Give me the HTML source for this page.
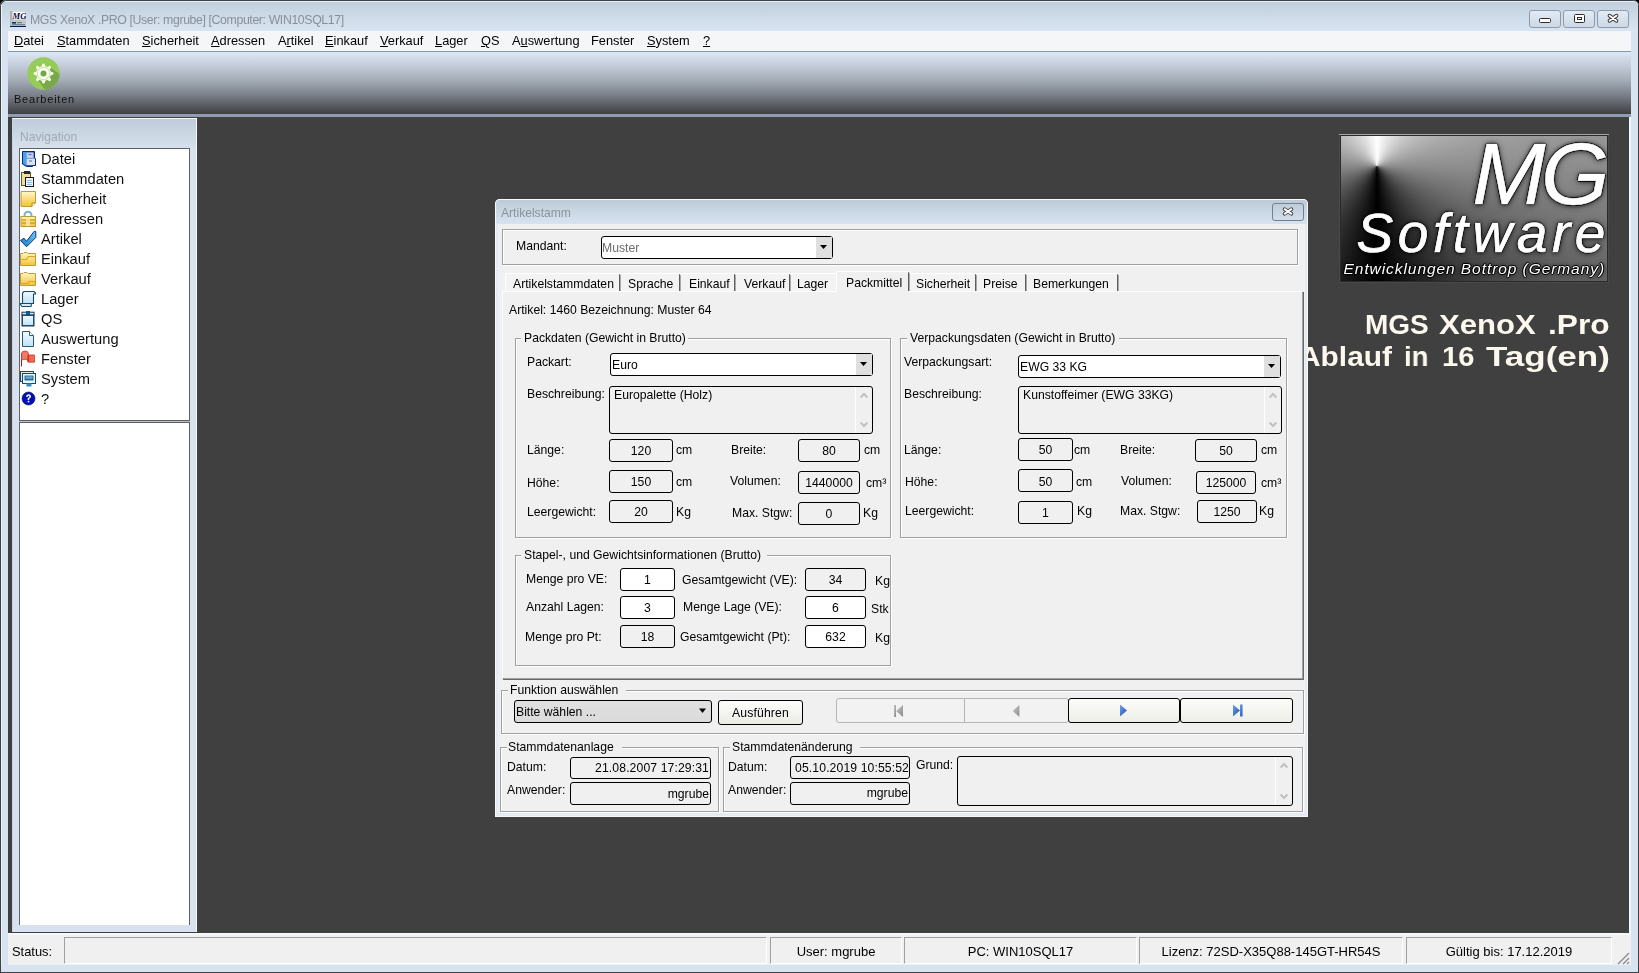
<!DOCTYPE html>
<html><head><meta charset="utf-8"><title>MGS XenoX .PRO</title>
<style>
html,body{margin:0;padding:0;width:1639px;height:973px;overflow:hidden;background:#2e2e2e;}
body{position:relative;font-family:"Liberation Sans", sans-serif;color:#000;}
.b{position:absolute;}
.t{position:absolute;white-space:nowrap;will-change:transform;}
u{text-decoration:underline;text-underline-offset:1px;}
</style></head><body>
<div class="b" style="left:0px;top:0px;width:1639px;height:973px;background:#000;"></div>
<div class="b" style="left:0px;top:0px;width:1639px;height:973px;background:#d7e3f0;border-radius:6px 6px 0 0;box-shadow:inset 1px 1px 0 #3e4146, inset -1px -1px 0 #3e4146;"></div>
<div class="b" style="left:1px;top:1px;width:1637px;height:31px;background:linear-gradient(#c1cfdd,#d9e5f2);border-radius:6px 6px 0 0;"></div>
<div class="b" style="left:5px;top:1px;width:1629px;height:1px;background:#e6edf5;"></div>
<div class="b" style="left:1px;top:5px;width:1px;height:960px;background:#eef3fa;"></div>
<svg class="b" style="left:10px;top:11px" width="16" height="16" viewBox="0 0 16 16"><rect x="0" y="0" width="16" height="16" fill="#aeb2b8"/><rect x="2.5" y="0.5" width="13" height="8" fill="#fff"/><text x="2.6" y="7.8" font-family="Liberation Serif" font-style="italic" font-weight="bold" font-size="8.6" fill="#06063a">MG</text><rect x="1" y="9" width="15" height="6" fill="#c3c6ca"/><rect x="2" y="11" width="4" height="1.6" fill="#14306a"/><rect x="7" y="11.2" width="5" height="1" fill="#5a7070"/><rect x="2" y="13" width="13" height="1.3" fill="#6a8a92"/><rect x="0" y="15" width="16" height="1.5" fill="#08185a"/></svg>
<div class="t" style="left:29.6px;top:12px;font-size:12.3px;line-height:16px;color:#8a9099;letter-spacing:-0.38px;">MGS XenoX .PRO [User: mgrube] [Computer: WIN10SQL17]</div>
<div class="b" style="left:1529px;top:10px;width:32px;height:18px;box-sizing:border-box;border:1px solid #8d9bad;border-radius:3px;background:linear-gradient(#e3ebf4,#ccd8e5);"></div>
<div class="b" style="left:1563px;top:10px;width:32px;height:18px;box-sizing:border-box;border:1px solid #8d9bad;border-radius:3px;background:linear-gradient(#e3ebf4,#ccd8e5);"></div>
<div class="b" style="left:1597px;top:10px;width:32px;height:18px;box-sizing:border-box;border:1px solid #8d9bad;border-radius:3px;background:linear-gradient(#e3ebf4,#ccd8e5);"></div>
<svg class="b" style="left:1529px;top:10px" width="100" height="18" viewBox="0 0 100 18"><rect x="10.5" y="8.5" width="11" height="4" rx="1" fill="#fff" stroke="#2a2a2a" stroke-width="1"/><rect x="45.5" y="4.5" width="10" height="8" rx="1" fill="#fff" stroke="#2a2a2a" stroke-width="1"/><rect x="48.5" y="7.5" width="4" height="2" fill="none" stroke="#2a2a2a" stroke-width="1"/><path d="M80.6 5.7 L87.4 10.8 M87.4 5.7 L80.6 10.8" stroke="#2a2a2a" stroke-width="3.8" stroke-linecap="round"/><path d="M80.6 5.7 L87.4 10.8 M87.4 5.7 L80.6 10.8" stroke="#fff" stroke-width="2" stroke-linecap="round"/></svg>
<div class="b" style="left:8px;top:31px;width:1623px;height:20px;background:#f5f6f7;"></div>
<div class="b" style="left:8px;top:51px;width:1623px;height:1px;background:#8797ab;"></div>
<div class="t" style="left:14px;top:33px;font-size:12.8px;line-height:16px;"><u>D</u>atei</div>
<div class="t" style="left:57px;top:33px;font-size:12.8px;line-height:16px;"><u>S</u>tammdaten</div>
<div class="t" style="left:142px;top:33px;font-size:12.8px;line-height:16px;"><u>S</u>icherheit</div>
<div class="t" style="left:211px;top:33px;font-size:12.8px;line-height:16px;"><u>A</u>dressen</div>
<div class="t" style="left:278px;top:33px;font-size:12.8px;line-height:16px;">A<u>r</u>tikel</div>
<div class="t" style="left:325px;top:33px;font-size:12.8px;line-height:16px;"><u>E</u>inkauf</div>
<div class="t" style="left:380px;top:33px;font-size:12.8px;line-height:16px;"><u>V</u>erkauf</div>
<div class="t" style="left:435px;top:33px;font-size:12.8px;line-height:16px;"><u>L</u>ager</div>
<div class="t" style="left:481px;top:33px;font-size:12.8px;line-height:16px;"><u>Q</u>S</div>
<div class="t" style="left:512px;top:33px;font-size:12.8px;line-height:16px;">A<u>u</u>swertung</div>
<div class="t" style="left:591px;top:33px;font-size:12.8px;line-height:16px;">Fenster</div>
<div class="t" style="left:647px;top:33px;font-size:12.8px;line-height:16px;"><u>S</u>ystem</div>
<div class="t" style="left:703px;top:33px;font-size:12.8px;line-height:16px;"><u>?</u></div>
<div class="b" style="left:8px;top:52px;width:1623px;height:62px;background:linear-gradient(#dce8f6 0%,#c3ccd8 22%,#a5adb8 45%,#7d838c 68%,#55585e 88%,#3e3f43 100%);"></div>
<div class="b" style="left:8px;top:114px;width:1623px;height:3px;background:#8f9cb2;"></div>
<svg class="b" style="left:27.2px;top:57.2px" width="33" height="33" viewBox="0 0 33 33"><defs><clipPath id="gc"><circle cx="16.5" cy="16.5" r="16.2"/></clipPath></defs><circle cx="16.5" cy="16.5" r="16.2" fill="#96cb5a"/><path d="M22.5 10 L34 18 L34 34 L19 34 L10.5 22.5 Z" fill="#78a84a" clip-path="url(#gc)"/><g fill="#f5fde2"><circle cx="16.5" cy="16.5" r="7.4"/><path d="M14.6 10 L15.3 6.9 Q16.5 5.9 17.7 6.9 L18.4 10 Z" transform="rotate(0 16.5 16.5)"/><path d="M14.6 10 L15.3 6.9 Q16.5 5.9 17.7 6.9 L18.4 10 Z" transform="rotate(45 16.5 16.5)"/><path d="M14.6 10 L15.3 6.9 Q16.5 5.9 17.7 6.9 L18.4 10 Z" transform="rotate(90 16.5 16.5)"/><path d="M14.6 10 L15.3 6.9 Q16.5 5.9 17.7 6.9 L18.4 10 Z" transform="rotate(135 16.5 16.5)"/><path d="M14.6 10 L15.3 6.9 Q16.5 5.9 17.7 6.9 L18.4 10 Z" transform="rotate(180 16.5 16.5)"/><path d="M14.6 10 L15.3 6.9 Q16.5 5.9 17.7 6.9 L18.4 10 Z" transform="rotate(225 16.5 16.5)"/><path d="M14.6 10 L15.3 6.9 Q16.5 5.9 17.7 6.9 L18.4 10 Z" transform="rotate(270 16.5 16.5)"/><path d="M14.6 10 L15.3 6.9 Q16.5 5.9 17.7 6.9 L18.4 10 Z" transform="rotate(315 16.5 16.5)"/></g><circle cx="16.5" cy="16.5" r="6.3" fill="none" stroke="#c9d6b4" stroke-width="0.9"/><circle cx="16.5" cy="16.5" r="4.2" fill="none" stroke="#fbfff0" stroke-width="2.3"/><circle cx="16.5" cy="16.5" r="3" fill="#76a64a"/></svg>
<div class="t" style="left:13.5px;top:92px;font-size:11px;line-height:14px;color:#111;letter-spacing:0.78px;">Bearbeiten</div>
<div class="b" style="left:8px;top:117px;width:1622px;height:816px;background:#404040;"></div>
<div class="b" style="left:1629px;top:117px;width:2px;height:818px;background:#f4f7fb;"></div>
<div class="b" style="left:8px;top:933px;width:1623px;height:2px;background:#f4f7fb;"></div>
<div class="b" style="left:12px;top:118px;width:185px;height:814px;background:linear-gradient(#bfcbd8 0px,#d7e2ee 32px,#d7e2ee 100%);"></div>
<div class="b" style="left:12px;top:118px;width:185px;height:1px;background:#f6f9fc;"></div>
<div class="b" style="left:196px;top:118px;width:1px;height:814px;background:#f6f9fc;"></div>
<div class="b" style="left:12px;top:118px;width:1px;height:814px;background:#c9d4e0;"></div>
<div class="t" style="left:19.6px;top:129px;font-size:12.1px;line-height:16px;color:#a1a9b3;">Navigation</div>
<div class="b" style="left:19px;top:148px;width:171px;height:273px;box-sizing:border-box;background:#fff;border:1px solid #5f6165;"></div>
<div class="b" style="left:19px;top:421px;width:171px;height:1px;background:#b9bfc6;"></div>
<div class="b" style="left:19px;top:422px;width:171px;height:503px;box-sizing:border-box;background:#fff;border:1px solid #5f6165;border-bottom:none;"></div>
<svg class="b" style="left:0;top:0" width="1" height="1"><defs><linearGradient id="gy" x1="0" y1="0" x2="0" y2="1"><stop offset="0" stop-color="#fff8c8"/><stop offset="1" stop-color="#f4c232"/></linearGradient><linearGradient id="gb" x1="1" y1="0" x2="0" y2="1"><stop offset="0" stop-color="#6ccaff"/><stop offset="1" stop-color="#1a78c8"/></linearGradient><linearGradient id="gl" x1="0" y1="0" x2="0" y2="1"><stop offset="0" stop-color="#f0faff"/><stop offset="1" stop-color="#bfe2f6"/></linearGradient><linearGradient id="gs" x1="0" y1="0" x2="0" y2="1"><stop offset="0" stop-color="#8acff4"/><stop offset="1" stop-color="#2a78b8"/></linearGradient></defs></svg>
<svg class="b" style="left:19px;top:149px" width="20" height="20" viewBox="0 0 20 20"><path d="M3.5 2.5 H15.5 V9.5 H16.5 V16.5 H13.5 V17.5 H7.5 L3.5 15 Z" fill="#1f5fb8" stroke="#0c2a66"/><path d="M4 3 H7.5 V16.5 L4 14.5Z" fill="#44a0f0"/><rect x="7.5" y="3.5" width="7" height="5.5" fill="#c3cff0"/><rect x="7.5" y="9.5" width="8.5" height="6.5" fill="#d8e0f6"/><path d="M9.5 5.5 h3 M10 12 h3" stroke="#5a6a90" stroke-width="1"/></svg>
<div class="t" style="left:40.6px;top:150px;font-size:14.7px;line-height:19px;color:#111;">Datei</div>
<svg class="b" style="left:19px;top:169px" width="20" height="20" viewBox="0 0 20 20"><rect x="2.5" y="3.5" width="9" height="13" fill="#f2dc98" stroke="#6b5b2a"/><rect x="5" y="2" width="6" height="3" fill="#2a2a2a"/><rect x="6.5" y="8.5" width="8" height="9" fill="#eaf4fc" stroke="#1a1a1a"/><path d="M8 11.5h5M8 13.5h5M8 15.5h5" stroke="#8cc0e8" stroke-width="1.2"/></svg>
<div class="t" style="left:40.6px;top:170px;font-size:14.7px;line-height:19px;color:#111;">Stammdaten</div>
<svg class="b" style="left:19px;top:189px" width="20" height="20" viewBox="0 0 20 20"><path d="M2 2.5 H16.5 V14 L13 17.5 H2 Z" fill="url(#gy)" stroke="#c09a3a"/><path d="M13 17.5 V14 H16.5" fill="#fff6c0" stroke="#b08a2a"/></svg>
<div class="t" style="left:40.6px;top:190px;font-size:14.7px;line-height:19px;color:#111;">Sicherheit</div>
<svg class="b" style="left:19px;top:209px" width="20" height="20" viewBox="0 0 20 20"><path d="M5.5 7.5 V6 A3.5 3.3 0 0 1 12.5 6 V7.5" fill="none" stroke="#7ab0d8" stroke-width="2"/><rect x="2" y="7.5" width="14.5" height="10" fill="url(#gy)" stroke="#c09a3a"/><path d="M2.5 11 H16 M2.5 14 H16" stroke="#d4a010" stroke-width="1.6"/><rect x="7" y="8" width="4" height="9" fill="#fbe9a0" opacity=".85"/></svg>
<div class="t" style="left:40.6px;top:210px;font-size:14.7px;line-height:19px;color:#111;">Adressen</div>
<svg class="b" style="left:19px;top:229px" width="20" height="20" viewBox="0 0 20 20"><path d="M1.5 11.5 L5 9.2 L7.5 12.3 L15.2 2.3 L16.8 2.6 L16.8 8.4 L7.5 17.8 Z" fill="url(#gb)" stroke="#0a3a70" stroke-width="1"/></svg>
<div class="t" style="left:40.6px;top:230px;font-size:14.7px;line-height:19px;color:#111;">Artikel</div>
<svg class="b" style="left:19px;top:249px" width="20" height="20" viewBox="0 0 20 20"><path d="M1.5 4.5 H4 L5 3.5 H8 L9 4.5 H16.5 V16.5 H1.5 Z" fill="url(#gy)" stroke="#c09a3a"/><path d="M1.5 10.5 H7.5 L9.5 7.5 H16.5" fill="none" stroke="#d8a820" stroke-width="1.2"/></svg>
<div class="t" style="left:40.6px;top:250px;font-size:14.7px;line-height:19px;color:#111;">Einkauf</div>
<svg class="b" style="left:19px;top:269px" width="20" height="20" viewBox="0 0 20 20"><path d="M1.5 4.5 H4 L5 3.5 H8 L9 4.5 H16.5 V16.5 H1.5 Z" fill="url(#gy)" stroke="#c09a3a"/><path d="M1.5 14.5 H9 L10 12.5 H16.5" fill="none" stroke="#d8a820" stroke-width="1.2"/></svg>
<div class="t" style="left:40.6px;top:270px;font-size:14.7px;line-height:19px;color:#111;">Verkauf</div>
<svg class="b" style="left:19px;top:289px" width="20" height="20" viewBox="0 0 20 20"><path d="M5 2.5 H15 L16.5 4 V5 H14.5 V14.5 H3.5 V4 Z" fill="url(#gl)" stroke="#1a4a6a" stroke-width="1.1"/><path d="M1.5 14.5 H12 Q12.8 16 12 17.5 H3 L1.5 15.5Z" fill="#d4ecfa" stroke="#1a4a6a" stroke-width="1.1"/></svg>
<div class="t" style="left:40.6px;top:290px;font-size:14.7px;line-height:19px;color:#111;">Lager</div>
<svg class="b" style="left:19px;top:309px" width="20" height="20" viewBox="0 0 20 20"><rect x="3" y="3.2" width="12" height="3" fill="#c8ecfc" stroke="#1a3a5a"/><rect x="7" y="2" width="4" height="4.5" fill="#0f5a96"/><rect x="3.2" y="6.2" width="11.6" height="10.6" fill="url(#gl)" stroke="#1a3a5a" stroke-width="1.4"/></svg>
<div class="t" style="left:40.6px;top:310px;font-size:14.7px;line-height:19px;color:#111;">QS</div>
<svg class="b" style="left:19px;top:329px" width="20" height="20" viewBox="0 0 20 20"><path d="M3.5 2.5 H10.5 L14.5 6.5 V17.5 H3.5 Z" fill="url(#gl)" stroke="#2a5a7a"/><path d="M10.5 2.5 V6.5 H14.5" fill="#fff" stroke="#2a5a7a"/></svg>
<div class="t" style="left:40.6px;top:330px;font-size:14.7px;line-height:19px;color:#111;">Auswertung</div>
<svg class="b" style="left:19px;top:349px" width="20" height="20" viewBox="0 0 20 20"><path d="M2.5 4 V17.5" stroke="#902818" stroke-width="1"/><path d="M2.5 5 Q2.5 2 6 2 Q9.5 2 9.5 5 V11 Q6 9.5 2.5 11Z" fill="#f07a68" stroke="#c83a28" stroke-width=".8"/><path d="M9 6 H15.5 V13.2 H9.5 Q8.5 13.2 8.5 12 Z" fill="#f06850" stroke="#c83a28" stroke-width=".8"/><path d="M9.5 6.5 V12.5" stroke="#d03020" stroke-width="1.2"/></svg>
<div class="t" style="left:40.6px;top:350px;font-size:14.7px;line-height:19px;color:#111;">Fenster</div>
<svg class="b" style="left:19px;top:369px" width="20" height="20" viewBox="0 0 20 20"><rect x="1.5" y="2.5" width="13" height="10" fill="#d8f0fc" stroke="#1a4a6a"/><rect x="3.5" y="4.5" width="13" height="10" fill="#e4f6fd" stroke="#1a4a6a"/><rect x="6" y="7" width="8" height="4" fill="url(#gs)" stroke="#1a4a6a" stroke-width=".8"/><rect x="7.5" y="14.5" width="5" height="3" fill="#3a8ac8"/></svg>
<div class="t" style="left:40.6px;top:370px;font-size:14.7px;line-height:19px;color:#111;">System</div>
<svg class="b" style="left:19px;top:389px" width="20" height="20" viewBox="0 0 20 20"><circle cx="9.5" cy="9.5" r="6.5" fill="#0010b4" stroke="#000a70" stroke-width=".6"/><path d="M7.2 7.9 Q7.2 5.3 9.6 5.3 Q12 5.3 12 7.5 Q12 8.9 10.2 9.7 V10.9 H8.7 V9.1 Q10.4 8.5 10.4 7.5 Q10.4 6.7 9.5 6.7 Q8.7 6.7 8.7 7.9Z" fill="#fff"/><rect x="8.7" y="11.8" width="1.6" height="1.6" fill="#fff"/></svg>
<div class="t" style="left:40.6px;top:390px;font-size:14.7px;line-height:19px;color:#111;">?</div>
<div class="b" style="left:8px;top:935px;width:1623px;height:30px;background:#f0f0f0;"></div>
<div class="t" style="left:12.4px;top:943px;font-size:12.9px;line-height:17px;">Status:</div>
<div class="b" style="left:64px;top:937px;width:703px;height:27px;box-sizing:border-box;border-top:1px solid #a0a0a0;border-left:1px solid #a0a0a0;border-right:1px solid #fff;border-bottom:1px solid #fff;"></div>
<div class="b" style="left:770px;top:937px;width:132px;height:27px;box-sizing:border-box;border-top:1px solid #a0a0a0;border-left:1px solid #a0a0a0;border-right:1px solid #fff;border-bottom:1px solid #fff;"></div>
<div class="t" style="left:770px;width:132px;text-align:center;top:943px;font-size:13px;line-height:17px;">User: mgrube</div>
<div class="b" style="left:904px;top:937px;width:233px;height:27px;box-sizing:border-box;border-top:1px solid #a0a0a0;border-left:1px solid #a0a0a0;border-right:1px solid #fff;border-bottom:1px solid #fff;"></div>
<div class="t" style="left:904px;width:233px;text-align:center;top:943px;font-size:13px;line-height:17px;">PC: WIN10SQL17</div>
<div class="b" style="left:1139px;top:937px;width:264px;height:27px;box-sizing:border-box;border-top:1px solid #a0a0a0;border-left:1px solid #a0a0a0;border-right:1px solid #fff;border-bottom:1px solid #fff;"></div>
<div class="t" style="left:1139px;width:264px;text-align:center;top:943px;font-size:13px;line-height:17px;">Lizenz: 72SD-X35Q88-145GT-HR54S</div>
<div class="b" style="left:1406px;top:937px;width:206px;height:27px;box-sizing:border-box;border-top:1px solid #a0a0a0;border-left:1px solid #a0a0a0;border-right:1px solid #fff;border-bottom:1px solid #fff;"></div>
<div class="t" style="left:1406px;width:206px;text-align:center;top:943px;font-size:13px;line-height:17px;">Gültig bis: 17.12.2019</div>
<svg class="b" style="left:1616px;top:950.5px" width="14" height="14" viewBox="0 0 14 14"><path d="M13 2 L2 13 M13 7 L7 13 M13 11 L11 13" stroke="#8a8a8a" stroke-width="1.3"/></svg>
<div class="b" style="left:1339px;top:134px;width:270px;height:149px;background:#4a4a4a;"></div>
<div class="b" style="left:1339px;top:134px;width:270px;height:1px;background:#a4a4a4;"></div>
<div class="b" style="left:1340px;top:135px;width:268px;height:147px;background:#2a2a2a;"></div>
<div class="b" style="left:1341px;top:136px;width:266px;height:145px;background:conic-gradient(from 0deg at 36px 30px,#ffffff 0deg,#8e8e8e 90deg,#000 180deg,#8a8a8a 270deg,#ffffff 360deg);overflow:hidden;"></div>
<div class="t" style="left:1385px;width:220px;text-align:right;top:119px;font-size:88px;line-height:110px;color:#fff;font-style:italic;text-shadow:1px 0 0 #000,-1px 0 0 #000,0 1px 0 #000,0 -1px 0 #000,0 0 2px #000,0 0 4px rgba(0,0,0,.8),0 1px 7px rgba(0,0,0,.6);letter-spacing:-4.5px;-webkit-text-stroke:0.5px #fff;">MG</div>
<div class="t" style="left:1289.5px;width:320px;text-align:right;top:199px;font-size:55px;line-height:69px;color:#fff;font-style:italic;text-shadow:1px 0 0 #000,-1px 0 0 #000,0 1px 0 #000,0 -1px 0 #000,0 0 2px #000,0 0 4px rgba(0,0,0,.8),0 1px 7px rgba(0,0,0,.6);letter-spacing:4.55px;-webkit-text-stroke:0.7px #fff;">Software</div>
<div class="t" style="left:1304.5px;width:300px;text-align:right;top:259px;font-size:15.5px;line-height:20px;color:#fff;font-style:italic;text-shadow:1px 0 0 #000,-1px 0 0 #000,0 1px 0 #000,0 -1px 0 #000,0 0 2px #000,0 0 4px rgba(0,0,0,.8),0 1px 7px rgba(0,0,0,.6);letter-spacing:0.93px;">Entwicklungen Bottrop (Germany)</div>
<div class="t" style="left:1365px;top:307px;font-size:28px;line-height:35px;color:#fcf8ee;font-weight:bold;transform:scaleX(1.0);transform-origin:0 0;">MGS</div>
<div class="t" style="left:1439px;top:307px;font-size:28px;line-height:35px;color:#fcf8ee;font-weight:bold;transform:scaleX(1.11);transform-origin:0 0;">XenoX</div>
<div class="t" style="left:1547.5px;top:307px;font-size:28px;line-height:35px;color:#fcf8ee;font-weight:bold;transform:scaleX(1.13);transform-origin:0 0;">.Pro</div>
<div class="t" style="left:1299.4px;top:339px;font-size:28px;line-height:35px;color:#fcf8ee;font-weight:bold;transform:scaleX(1.067);transform-origin:0 0;">Ablauf</div>
<div class="t" style="left:1403.5px;top:339px;font-size:28px;line-height:35px;color:#fcf8ee;font-weight:bold;transform:scaleX(0.985);transform-origin:0 0;">in</div>
<div class="t" style="left:1441.5px;top:339px;font-size:28px;line-height:35px;color:#fcf8ee;font-weight:bold;transform:scaleX(1.04);transform-origin:0 0;">16</div>
<div class="t" style="left:1486px;top:339px;font-size:28px;line-height:35px;color:#fcf8ee;font-weight:bold;transform:scaleX(1.25);transform-origin:0 0;">Tag(en)</div>
<div class="b" style="left:495px;top:199px;width:813px;height:618px;background:#e4ebf3;border-radius:5px 5px 0 0;box-shadow:inset 1px 1px 0 #f7fafd, inset -1px -1px 0 #f3f7fb;"></div>
<div class="b" style="left:496px;top:200px;width:811px;height:24px;background:linear-gradient(#bdcbd9,#d7e3f0);border-radius:4px 4px 0 0;"></div>
<div class="b" style="left:498px;top:224px;width:807px;height:589px;background:#f0f0f0;"></div>
<div class="t" style="left:501px;top:205px;font-size:12.1px;line-height:16px;color:#8c939c;">Artikelstamm</div>
<div class="b" style="left:1272px;top:203px;width:32px;height:18px;box-sizing:border-box;border:1px solid #74808f;border-radius:3px;background:linear-gradient(#bfccda,#d2deeb);"></div>
<svg class="b" style="left:1272px;top:203px" width="32" height="18" viewBox="0 0 32 18"><path d="M12.6 6.2 L19.4 10.8 M19.4 6.2 L12.6 10.8" stroke="#3a3a3a" stroke-width="3.8" stroke-linecap="round"/><path d="M12.6 6.2 L19.4 10.8 M19.4 6.2 L12.6 10.8" stroke="#fff" stroke-width="2" stroke-linecap="round"/></svg>
<div class="b" style="left:502px;top:229px;width:796px;height:36px;box-sizing:border-box;border:1px solid #a0a0a0;box-shadow:1px 1px 0 #fff, inset 1px 1px 0 #fff;"></div>
<div class="t" style="left:516px;top:238px;font-size:12.2px;line-height:16px;">Mandant:</div>
<div class="b" style="left:601px;top:236px;width:232px;height:23px;box-sizing:border-box;border:1px solid #000;border-radius:3px;background:#fff;"></div>
<div class="b" style="left:816px;top:237px;width:16px;height:21px;background:#dfdfdf;"></div>
<svg class="b" style="left:819px;top:244px" width="9" height="6" viewBox="0 0 9 6"><path d="M1 1 H8 L4.5 5 Z" fill="#000"/></svg>
<div class="t" style="left:602px;top:240px;font-size:12.2px;line-height:16px;color:#6d6d6d;">Muster</div>
<div class="b" style="left:502px;top:291px;width:801px;height:388px;box-sizing:border-box;background:#f0f0f0;border-top:1px solid #fff;border-left:1px solid #fff;border-right:1px solid #a0a0a0;border-bottom:1px solid #a0a0a0;box-shadow:1px 1px 0 #696969;"></div>
<div class="b" style="left:505px;top:273px;width:115px;height:18px;background:#f3f3f3;border-top:1px solid #fff;box-sizing:border-box;border-radius:3px 0 0 0;border-left:1px solid #fff;"></div>
<div class="b" style="left:620px;top:273px;width:60px;height:18px;background:#f3f3f3;border-top:1px solid #fff;box-sizing:border-box;"></div>
<div class="b" style="left:680px;top:273px;width:55px;height:18px;background:#f3f3f3;border-top:1px solid #fff;box-sizing:border-box;"></div>
<div class="b" style="left:735px;top:273px;width:55px;height:18px;background:#f3f3f3;border-top:1px solid #fff;box-sizing:border-box;"></div>
<div class="b" style="left:790px;top:273px;width:46px;height:18px;background:#f3f3f3;border-top:1px solid #fff;box-sizing:border-box;"></div>
<div class="b" style="left:836px;top:271px;width:73px;height:21px;background:#f0f0f0;border-top:1px solid #fff;border-left:1px solid #fff;box-sizing:border-box;border-radius:2px 0 0 0;"></div>
<div class="b" style="left:909px;top:273px;width:67px;height:18px;background:#f3f3f3;border-top:1px solid #fff;box-sizing:border-box;"></div>
<div class="b" style="left:976px;top:273px;width:50px;height:18px;background:#f3f3f3;border-top:1px solid #fff;box-sizing:border-box;"></div>
<div class="b" style="left:1026px;top:273px;width:92px;height:18px;background:#f3f3f3;border-top:1px solid #fff;box-sizing:border-box;"></div>
<div class="b" style="left:619px;top:274px;width:1px;height:17px;background:#5e5e5e;border-radius:1px 0 0 0;"></div>
<div class="b" style="left:620px;top:275px;width:1px;height:16px;background:#a9a9a9;"></div>
<div class="b" style="left:679px;top:274px;width:1px;height:17px;background:#5e5e5e;border-radius:1px 0 0 0;"></div>
<div class="b" style="left:680px;top:275px;width:1px;height:16px;background:#a9a9a9;"></div>
<div class="b" style="left:734px;top:274px;width:1px;height:17px;background:#5e5e5e;border-radius:1px 0 0 0;"></div>
<div class="b" style="left:735px;top:275px;width:1px;height:16px;background:#a9a9a9;"></div>
<div class="b" style="left:789px;top:274px;width:1px;height:17px;background:#5e5e5e;border-radius:1px 0 0 0;"></div>
<div class="b" style="left:790px;top:275px;width:1px;height:16px;background:#a9a9a9;"></div>
<div class="b" style="left:908px;top:272px;width:1px;height:19px;background:#5e5e5e;border-radius:1px 0 0 0;"></div>
<div class="b" style="left:909px;top:273px;width:1px;height:18px;background:#a9a9a9;"></div>
<div class="b" style="left:975px;top:274px;width:1px;height:17px;background:#5e5e5e;border-radius:1px 0 0 0;"></div>
<div class="b" style="left:976px;top:275px;width:1px;height:16px;background:#a9a9a9;"></div>
<div class="b" style="left:1025px;top:274px;width:1px;height:17px;background:#5e5e5e;border-radius:1px 0 0 0;"></div>
<div class="b" style="left:1026px;top:275px;width:1px;height:16px;background:#a9a9a9;"></div>
<div class="b" style="left:1117px;top:274px;width:1px;height:17px;background:#5e5e5e;border-radius:1px 0 0 0;"></div>
<div class="b" style="left:1118px;top:275px;width:1px;height:16px;background:#a9a9a9;"></div>
<div class="t" style="left:513px;top:276px;font-size:12.2px;line-height:16px;">Artikelstammdaten</div>
<div class="t" style="left:628px;top:276px;font-size:12.2px;line-height:16px;">Sprache</div>
<div class="t" style="left:689px;top:276px;font-size:12.2px;line-height:16px;">Einkauf</div>
<div class="t" style="left:744px;top:276px;font-size:12.2px;line-height:16px;">Verkauf</div>
<div class="t" style="left:797px;top:276px;font-size:12.2px;line-height:16px;">Lager</div>
<div class="t" style="left:846px;top:275px;font-size:12.2px;line-height:16px;">Packmittel</div>
<div class="t" style="left:916px;top:276px;font-size:12.2px;line-height:16px;">Sicherheit</div>
<div class="t" style="left:983px;top:276px;font-size:12.2px;line-height:16px;">Preise</div>
<div class="t" style="left:1033px;top:276px;font-size:12.2px;line-height:16px;">Bemerkungen</div>
<div class="t" style="left:509px;top:302px;font-size:12.2px;line-height:16px;">Artikel: 1460 Bezeichnung: Muster 64</div>
<div class="b" style="left:515px;top:338px;width:376px;height:200px;box-sizing:border-box;border:1px solid #a0a0a0;box-shadow:1px 1px 0 #fff, inset 1px 1px 0 #fff;"></div>
<div class="b" style="left:521.4px;top:336px;width:167px;height:5px;background:#f0f0f0;"></div>
<div class="t" style="left:524px;top:330px;font-size:12.2px;line-height:16px;">Packdaten (Gewicht in Brutto)</div>
<div class="t" style="left:527px;top:354px;font-size:12.2px;line-height:16px;">Packart:</div>
<div class="b" style="left:610px;top:353px;width:263px;height:23px;box-sizing:border-box;border:1px solid #000;border-radius:3px;background:#fff;"></div>
<div class="b" style="left:856px;top:354px;width:16px;height:21px;background:#dfdfdf;"></div>
<svg class="b" style="left:859px;top:361px" width="9" height="6" viewBox="0 0 9 6"><path d="M1 1 H8 L4.5 5 Z" fill="#000"/></svg>
<div class="t" style="left:612px;top:357px;font-size:12.2px;line-height:16px;">Euro</div>
<div class="t" style="left:527px;top:386px;font-size:12.2px;line-height:16px;">Beschreibung:</div>
<div class="b" style="left:609px;top:386px;width:264px;height:48px;box-sizing:border-box;border:1px solid #000;border-radius:3px;background:#f0f0f0;"></div>
<div class="b" style="left:855px;top:387px;width:1px;height:46px;background:#fff;"></div>
<svg class="b" style="left:858px;top:386px" width="12" height="48" viewBox="0 0 12 48"><path d="M2.6 11.4 L6 8 L9.4 11.4" fill="none" stroke="#c2c2c2" stroke-width="2.1"/><path d="M2.6 36.6 L6 40 L9.4 36.6" fill="none" stroke="#c2c2c2" stroke-width="2.1"/></svg>
<div class="t" style="left:614px;top:387px;font-size:12.2px;line-height:16px;">Europalette (Holz)</div>
<div class="t" style="left:527px;top:442px;font-size:12.2px;line-height:16px;">Länge:</div>
<div class="t" style="left:527px;top:475px;font-size:12.2px;line-height:16px;">Höhe:</div>
<div class="t" style="left:527px;top:504px;font-size:12.2px;line-height:16px;">Leergewicht:</div>
<div class="b" style="left:609px;top:439px;width:64px;height:23px;box-sizing:border-box;border:1px solid #000;border-radius:3px;background:#f0f0f0;"></div>
<div class="t" style="left:609px;width:64px;text-align:center;top:443px;font-size:12.2px;line-height:16px;">120</div>
<div class="b" style="left:609px;top:470px;width:64px;height:23px;box-sizing:border-box;border:1px solid #000;border-radius:3px;background:#f0f0f0;"></div>
<div class="t" style="left:609px;width:64px;text-align:center;top:474px;font-size:12.2px;line-height:16px;">150</div>
<div class="b" style="left:609px;top:500px;width:64px;height:23px;box-sizing:border-box;border:1px solid #000;border-radius:3px;background:#f0f0f0;"></div>
<div class="t" style="left:609px;width:64px;text-align:center;top:504px;font-size:12.2px;line-height:16px;">20</div>
<div class="t" style="left:676px;top:442px;font-size:12.2px;line-height:16px;">cm</div>
<div class="t" style="left:676px;top:474px;font-size:12.2px;line-height:16px;">cm</div>
<div class="t" style="left:676px;top:504px;font-size:12.2px;line-height:16px;">Kg</div>
<div class="t" style="left:731px;top:442px;font-size:12.2px;line-height:16px;">Breite:</div>
<div class="t" style="left:730px;top:473px;font-size:12.2px;line-height:16px;">Volumen:</div>
<div class="t" style="left:732px;top:505px;font-size:12.2px;line-height:16px;">Max. Stgw:</div>
<div class="b" style="left:798px;top:439px;width:62px;height:23px;box-sizing:border-box;border:1px solid #000;border-radius:3px;background:#f0f0f0;"></div>
<div class="t" style="left:798px;width:62px;text-align:center;top:443px;font-size:12.2px;line-height:16px;">80</div>
<div class="b" style="left:798px;top:471px;width:62px;height:23px;box-sizing:border-box;border:1px solid #000;border-radius:3px;background:#f0f0f0;"></div>
<div class="t" style="left:798px;width:62px;text-align:center;top:475px;font-size:12.2px;line-height:16px;">1440000</div>
<div class="b" style="left:798px;top:502px;width:62px;height:23px;box-sizing:border-box;border:1px solid #000;border-radius:3px;background:#f0f0f0;"></div>
<div class="t" style="left:798px;width:62px;text-align:center;top:506px;font-size:12.2px;line-height:16px;">0</div>
<div class="t" style="left:864px;top:442px;font-size:12.2px;line-height:16px;">cm</div>
<div class="t" style="left:866px;top:475px;font-size:12.2px;line-height:16px;">cm³</div>
<div class="t" style="left:863px;top:505px;font-size:12.2px;line-height:16px;">Kg</div>
<div class="b" style="left:900px;top:338px;width:387px;height:200px;box-sizing:border-box;border:1px solid #a0a0a0;box-shadow:1px 1px 0 #fff, inset 1px 1px 0 #fff;"></div>
<div class="b" style="left:906.6px;top:336px;width:212px;height:5px;background:#f0f0f0;"></div>
<div class="t" style="left:910px;top:330px;font-size:12.2px;line-height:16px;">Verpackungsdaten (Gewicht in Brutto)</div>
<div class="t" style="left:904px;top:354px;font-size:12.2px;line-height:16px;">Verpackungsart:</div>
<div class="b" style="left:1018px;top:355px;width:263px;height:23px;box-sizing:border-box;border:1px solid #000;border-radius:3px;background:#fff;"></div>
<div class="b" style="left:1264px;top:356px;width:16px;height:21px;background:#dfdfdf;"></div>
<svg class="b" style="left:1267px;top:363px" width="9" height="6" viewBox="0 0 9 6"><path d="M1 1 H8 L4.5 5 Z" fill="#000"/></svg>
<div class="t" style="left:1020px;top:359px;font-size:12.2px;line-height:16px;">EWG 33 KG</div>
<div class="t" style="left:904px;top:386px;font-size:12.2px;line-height:16px;">Beschreibung:</div>
<div class="b" style="left:1018px;top:386px;width:264px;height:48px;box-sizing:border-box;border:1px solid #000;border-radius:3px;background:#f0f0f0;"></div>
<div class="b" style="left:1264px;top:387px;width:1px;height:46px;background:#fff;"></div>
<svg class="b" style="left:1267px;top:386px" width="12" height="48" viewBox="0 0 12 48"><path d="M2.6 11.4 L6 8 L9.4 11.4" fill="none" stroke="#c2c2c2" stroke-width="2.1"/><path d="M2.6 36.6 L6 40 L9.4 36.6" fill="none" stroke="#c2c2c2" stroke-width="2.1"/></svg>
<div class="t" style="left:1023px;top:387px;font-size:12.2px;line-height:16px;">Kunstoffeimer (EWG 33KG)</div>
<div class="t" style="left:904px;top:442px;font-size:12.2px;line-height:16px;">Länge:</div>
<div class="t" style="left:905px;top:474px;font-size:12.2px;line-height:16px;">Höhe:</div>
<div class="t" style="left:905px;top:503px;font-size:12.2px;line-height:16px;">Leergewicht:</div>
<div class="b" style="left:1018px;top:438px;width:55px;height:23px;box-sizing:border-box;border:1px solid #000;border-radius:3px;background:#f0f0f0;"></div>
<div class="t" style="left:1018px;width:55px;text-align:center;top:442px;font-size:12.2px;line-height:16px;">50</div>
<div class="b" style="left:1018px;top:469px;width:55px;height:23px;box-sizing:border-box;border:1px solid #000;border-radius:3px;background:#f0f0f0;"></div>
<div class="t" style="left:1018px;width:55px;text-align:center;top:474px;font-size:12.2px;line-height:16px;">50</div>
<div class="b" style="left:1018px;top:501px;width:55px;height:23px;box-sizing:border-box;border:1px solid #000;border-radius:3px;background:#f0f0f0;"></div>
<div class="t" style="left:1018px;width:55px;text-align:center;top:505px;font-size:12.2px;line-height:16px;">1</div>
<div class="t" style="left:1074px;top:442px;font-size:12.2px;line-height:16px;">cm</div>
<div class="t" style="left:1076px;top:474px;font-size:12.2px;line-height:16px;">cm</div>
<div class="t" style="left:1077px;top:503px;font-size:12.2px;line-height:16px;">Kg</div>
<div class="t" style="left:1120px;top:442px;font-size:12.2px;line-height:16px;">Breite:</div>
<div class="t" style="left:1121px;top:473px;font-size:12.2px;line-height:16px;">Volumen:</div>
<div class="t" style="left:1120px;top:503px;font-size:12.2px;line-height:16px;">Max. Stgw:</div>
<div class="b" style="left:1195px;top:439px;width:62px;height:23px;box-sizing:border-box;border:1px solid #000;border-radius:3px;background:#f0f0f0;"></div>
<div class="t" style="left:1195px;width:62px;text-align:center;top:443px;font-size:12.2px;line-height:16px;">50</div>
<div class="b" style="left:1196px;top:471px;width:60px;height:23px;box-sizing:border-box;border:1px solid #000;border-radius:3px;background:#f0f0f0;"></div>
<div class="t" style="left:1196px;width:60px;text-align:center;top:475px;font-size:12.2px;line-height:16px;">125000</div>
<div class="b" style="left:1197px;top:500px;width:60px;height:23px;box-sizing:border-box;border:1px solid #000;border-radius:3px;background:#f0f0f0;"></div>
<div class="t" style="left:1197px;width:60px;text-align:center;top:504px;font-size:12.2px;line-height:16px;">1250</div>
<div class="t" style="left:1261px;top:442px;font-size:12.2px;line-height:16px;">cm</div>
<div class="t" style="left:1261px;top:475px;font-size:12.2px;line-height:16px;">cm³</div>
<div class="t" style="left:1259px;top:503px;font-size:12.2px;line-height:16px;">Kg</div>
<div class="b" style="left:515px;top:555px;width:376px;height:111px;box-sizing:border-box;border:1px solid #a0a0a0;box-shadow:1px 1px 0 #fff, inset 1px 1px 0 #fff;"></div>
<div class="b" style="left:521.4px;top:553px;width:246px;height:5px;background:#f0f0f0;"></div>
<div class="t" style="left:524px;top:547px;font-size:12.2px;line-height:16px;">Stapel-, und Gewichtsinformationen (Brutto)</div>
<div class="t" style="left:526px;top:571px;font-size:12.2px;line-height:16px;">Menge pro VE:</div>
<div class="t" style="left:526px;top:599px;font-size:12.2px;line-height:16px;">Anzahl Lagen:</div>
<div class="t" style="left:525px;top:629px;font-size:12.2px;line-height:16px;">Menge pro Pt:</div>
<div class="b" style="left:620px;top:568px;width:55px;height:23px;box-sizing:border-box;border:1px solid #000;border-radius:3px;background:#fff;"></div>
<div class="t" style="left:620px;width:55px;text-align:center;top:572px;font-size:12.2px;line-height:16px;">1</div>
<div class="b" style="left:620px;top:596px;width:55px;height:23px;box-sizing:border-box;border:1px solid #000;border-radius:3px;background:#fff;"></div>
<div class="t" style="left:620px;width:55px;text-align:center;top:600px;font-size:12.2px;line-height:16px;">3</div>
<div class="b" style="left:620px;top:625px;width:55px;height:23px;box-sizing:border-box;border:1px solid #000;border-radius:3px;background:#f0f0f0;"></div>
<div class="t" style="left:620px;width:55px;text-align:center;top:629px;font-size:12.2px;line-height:16px;">18</div>
<div class="t" style="left:682px;top:572px;font-size:12.2px;line-height:16px;">Gesamtgewicht (VE):</div>
<div class="t" style="left:683px;top:599px;font-size:12.2px;line-height:16px;">Menge Lage (VE):</div>
<div class="t" style="left:680px;top:629px;font-size:12.2px;line-height:16px;">Gesamtgewicht (Pt):</div>
<div class="b" style="left:805px;top:568px;width:61px;height:23px;box-sizing:border-box;border:1px solid #000;border-radius:3px;background:#f0f0f0;"></div>
<div class="t" style="left:805px;width:61px;text-align:center;top:572px;font-size:12.2px;line-height:16px;">34</div>
<div class="b" style="left:805px;top:596px;width:61px;height:23px;box-sizing:border-box;border:1px solid #000;border-radius:3px;background:#fff;"></div>
<div class="t" style="left:805px;width:61px;text-align:center;top:600px;font-size:12.2px;line-height:16px;">6</div>
<div class="b" style="left:805px;top:625px;width:61px;height:23px;box-sizing:border-box;border:1px solid #000;border-radius:3px;background:#fff;"></div>
<div class="t" style="left:805px;width:61px;text-align:center;top:629px;font-size:12.2px;line-height:16px;">632</div>
<div class="t" style="left:875px;top:573px;font-size:12.2px;line-height:16px;">Kg</div>
<div class="t" style="left:871px;top:601px;font-size:12.2px;line-height:16px;">Stk</div>
<div class="t" style="left:875px;top:630px;font-size:12.2px;line-height:16px;">Kg</div>
<div class="b" style="left:501px;top:690px;width:803px;height:44px;box-sizing:border-box;border:1px solid #a0a0a0;box-shadow:1px 1px 0 #fff, inset 1px 1px 0 #fff;"></div>
<div class="b" style="left:507.7px;top:688px;width:118px;height:5px;background:#f0f0f0;"></div>
<div class="t" style="left:510px;top:682px;font-size:12.2px;line-height:16px;">Funktion auswählen</div>
<div class="b" style="left:514px;top:700px;width:198px;height:23px;box-sizing:border-box;border:1px solid #000;border-radius:3px;background:linear-gradient(#e0e0e0,#dbdbdb);"></div>
<svg class="b" style="left:698px;top:708px" width="9" height="6" viewBox="0 0 9 6"><path d="M1 0.5 H8 L4.5 5 Z" fill="#000"/></svg>
<div class="t" style="left:516px;top:704px;font-size:12.2px;line-height:16px;">Bitte wählen ...</div>
<div class="b" style="left:718px;top:700px;width:85px;height:25px;box-sizing:border-box;border:1px solid #000;border-radius:3px;background:linear-gradient(#fdfdfb,#ecece6);"></div>
<div class="t" style="left:718px;width:85px;text-align:center;top:705px;font-size:12.2px;line-height:16px;letter-spacing:0.15px;">Ausführen</div>
<div class="b" style="left:836px;top:698px;width:129px;height:25px;box-sizing:border-box;border:1px solid #b5b5b5;border-radius:3px 0 0 3px;background:#f2f2f2;"></div>
<div class="b" style="left:964px;top:698px;width:105px;height:25px;box-sizing:border-box;border:1px solid #b5b5b5;border-radius:0 3px 3px 0;background:#f2f2f2;"></div>
<div class="b" style="left:1068px;top:698px;width:112px;height:25px;box-sizing:border-box;border:1px solid #000;border-radius:3px;background:linear-gradient(#fcfcfa,#eeeee8);"></div>
<div class="b" style="left:1180px;top:698px;width:113px;height:25px;box-sizing:border-box;border:1px solid #000;border-radius:3px;background:linear-gradient(#fcfcfa,#eeeee8);"></div>
<svg class="b" style="left:890px;top:703px" width="410" height="16" viewBox="0 0 410 16"><defs><linearGradient id="bl" x1="0" y1="0" x2="1" y2="1"><stop offset="0" stop-color="#6fa0ee"/><stop offset="1" stop-color="#1f4fb0"/></linearGradient><linearGradient id="gr" x1="0" y1="0" x2="1" y2="1"><stop offset="0" stop-color="#c8c8c8"/><stop offset="1" stop-color="#8a8a8a"/></linearGradient></defs><rect x="4" y="2" width="2" height="12" fill="url(#gr)"/><path d="M13 2 V14 L6 8 Z" fill="url(#gr)"/><path d="M129.4 2 V14 L122.6 8 Z" fill="url(#gr)"/><path d="M230 1.5 V13.5 L237 7.5 Z" fill="url(#bl)"/><path d="M343 1.5 V13.5 L350 7.5 Z" fill="url(#bl)"/><rect x="350" y="1.5" width="2.5" height="12" fill="url(#bl)"/></svg>
<div class="b" style="left:500px;top:747px;width:219px;height:65px;box-sizing:border-box;border:1px solid #a0a0a0;box-shadow:1px 1px 0 #fff, inset 1px 1px 0 #fff;"></div>
<div class="b" style="left:506.5px;top:745px;width:115px;height:5px;background:#f0f0f0;"></div>
<div class="t" style="left:508px;top:739px;font-size:12.2px;line-height:16px;">Stammdatenanlage</div>
<div class="t" style="left:507px;top:759px;font-size:12.2px;line-height:16px;">Datum:</div>
<div class="b" style="left:570px;top:757px;width:141px;height:22px;box-sizing:border-box;border:1px solid #000;border-radius:3px;background:#f0f0f0;"></div>
<div class="t" style="left:508.61px;width:200px;text-align:right;top:760px;font-size:12.2px;line-height:16px;letter-spacing:0.11px;">21.08.2007 17:29:31</div>
<div class="t" style="left:507px;top:782px;font-size:12.2px;line-height:16px;">Anwender:</div>
<div class="b" style="left:570px;top:782px;width:141px;height:23px;box-sizing:border-box;border:1px solid #000;border-radius:3px;background:#f0f0f0;"></div>
<div class="t" style="left:508.5px;width:200px;text-align:right;top:786px;font-size:12.2px;line-height:16px;">mgrube</div>
<div class="b" style="left:723px;top:747px;width:580px;height:65px;box-sizing:border-box;border:1px solid #a0a0a0;box-shadow:1px 1px 0 #fff, inset 1px 1px 0 #fff;"></div>
<div class="b" style="left:729.8px;top:745px;width:130px;height:5px;background:#f0f0f0;"></div>
<div class="t" style="left:732px;top:739px;font-size:12.2px;line-height:16px;">Stammdatenänderung</div>
<div class="t" style="left:728px;top:759px;font-size:12.2px;line-height:16px;">Datum:</div>
<div class="b" style="left:790px;top:756px;width:120px;height:23px;box-sizing:border-box;border:1px solid #000;border-radius:3px;background:#f0f0f0;"></div>
<div class="t" style="left:708.61px;width:200px;text-align:right;top:760px;font-size:12.2px;line-height:16px;letter-spacing:0.11px;">05.10.2019 10:55:52</div>
<div class="t" style="left:728px;top:782px;font-size:12.2px;line-height:16px;">Anwender:</div>
<div class="b" style="left:790px;top:782px;width:120px;height:23px;box-sizing:border-box;border:1px solid #000;border-radius:3px;background:#f0f0f0;"></div>
<div class="t" style="left:708px;width:200px;text-align:right;top:785px;font-size:12.2px;line-height:16px;">mgrube</div>
<div class="t" style="left:916px;top:757px;font-size:12.2px;line-height:16px;">Grund:</div>
<div class="b" style="left:957px;top:756px;width:336px;height:50px;box-sizing:border-box;border:1px solid #000;border-radius:3px;background:#f0f0f0;"></div>
<div class="b" style="left:1275px;top:757px;width:1px;height:48px;background:#fff;"></div>
<svg class="b" style="left:1278px;top:756px" width="12" height="50" viewBox="0 0 12 50"><path d="M2.6 11.4 L6 8 L9.4 11.4" fill="none" stroke="#c2c2c2" stroke-width="2.1"/><path d="M2.6 38.6 L6 42 L9.4 38.6" fill="none" stroke="#c2c2c2" stroke-width="2.1"/></svg>
</body></html>
